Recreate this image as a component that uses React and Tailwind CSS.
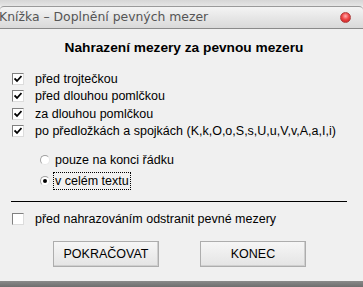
import React from "react";

function Check({ checked }) {
  return (
    <div className="w-[12px] h-[12px] bg-white border border-t-[#808080] border-l-[#808080] border-r-[#dcdcdc] border-b-[#dcdcdc] flex items-center justify-center shrink-0">
      {checked && (
        <svg width="8" height="8" viewBox="0 0 8 8">
          <path d="M0.5 3.5 L3 6 L7.5 1" stroke="#000" strokeWidth="1.8" fill="none" />
        </svg>
      )}
    </div>
  );
}

function Radio({ checked }) {
  return (
    <div className="w-[10px] h-[10px] rounded-full bg-white border border-t-[#a0a0a0] border-l-[#a0a0a0] border-r-[#e8e8e8] border-b-[#e8e8e8] flex items-center justify-center shrink-0">
      {checked && <div className="w-[4px] h-[4px] rounded-full bg-black" />}
    </div>
  );
}

export default function App() {
  return (
    <div className="w-[363px] h-[287px] overflow-hidden flex flex-col bg-[#f0f0f0] text-black" style={{ fontFamily: "'Liberation Sans', Arial, sans-serif" }}>
      <div className="h-[6px] bg-gradient-to-b from-[#d6d6d6] to-[#e6e6e6] shrink-0" />
      <div className="h-[23px] shrink-0 flex items-center justify-between rounded-t-[4px] border-t border-[#9a9a9a] bg-gradient-to-b from-[#f4f4f4] to-[#d9d9d9] border-b border-b-[#8a8a8a]">
        <span className="text-[#555555] ml-[-1px] leading-none" style={{ fontFamily: "'DejaVu Sans', sans-serif", fontSize: "12.4px" }}>Knížka – Doplnění pevných mezer</span>
        <div className="w-[11px] h-[11px] rounded-full mr-[12px] bg-[radial-gradient(circle_at_50%_35%,#ffb0b0_0%,#f04848_45%,#c01818_100%)] border border-[#b04040]" />
      </div>
      <div className="flex-1 flex flex-col text-[12.5px]">
        <div className="mt-[11px] text-center font-bold text-[13.7px] leading-[16px] pl-[5px]">Nahrazení mezery za pevnou mezeru</div>
        <div className="mt-[14px] flex flex-col pl-[12px]">
          {["před trojtečkou", "před dlouhou pomlčkou", "za dlouhou pomlčkou", "po předložkách a spojkách (K,k,O,o,S,s,U,u,V,v,A,a,I,i)"].map((t) => (
            <div key={t} className="h-[17.5px] flex items-center gap-[11px]">
              <Check checked />
              <span className="leading-none">{t}</span>
            </div>
          ))}
        </div>
        <div className="mt-[11px] flex flex-col pl-[40px] gap-[3px]">
          <div className="h-[18px] flex items-center gap-[5px]">
            <Radio />
            <span className="leading-none">pouze na konci řádku</span>
          </div>
          <div className="h-[18px] flex items-center gap-[3px]">
            <Radio checked />
            <span className="leading-none px-[1px] py-[2px] border border-dotted border-black">v celém textu</span>
          </div>
        </div>
        <div className="mt-[11px] ml-[11px] mr-[16px] h-px bg-black" />
        <div className="mt-[9px] pl-[12px] h-[16px] flex items-center gap-[11px]">
          <Check />
          <span className="leading-none">před nahrazováním odstranit pevné mezery</span>
        </div>
        <div className="mt-[14px] flex pl-[53px] gap-[41px]">
          {["POKRAČOVAT", "KONEC"].map((b) => (
            <div key={b} className="w-[106px] h-[26px] flex items-center justify-center bg-gradient-to-b from-[#f6f6f6] to-[#e4e4e4] border border-[#adadad] shadow-[inset_-1px_-1px_0_#cfcfcf] text-[12.5px]">
              {b}
            </div>
          ))}
        </div>
      </div>
      <div className="h-[6px] shrink-0 bg-gradient-to-b from-[#8a8a8a] to-[#6e6e6e]" />
    </div>
  );
}
